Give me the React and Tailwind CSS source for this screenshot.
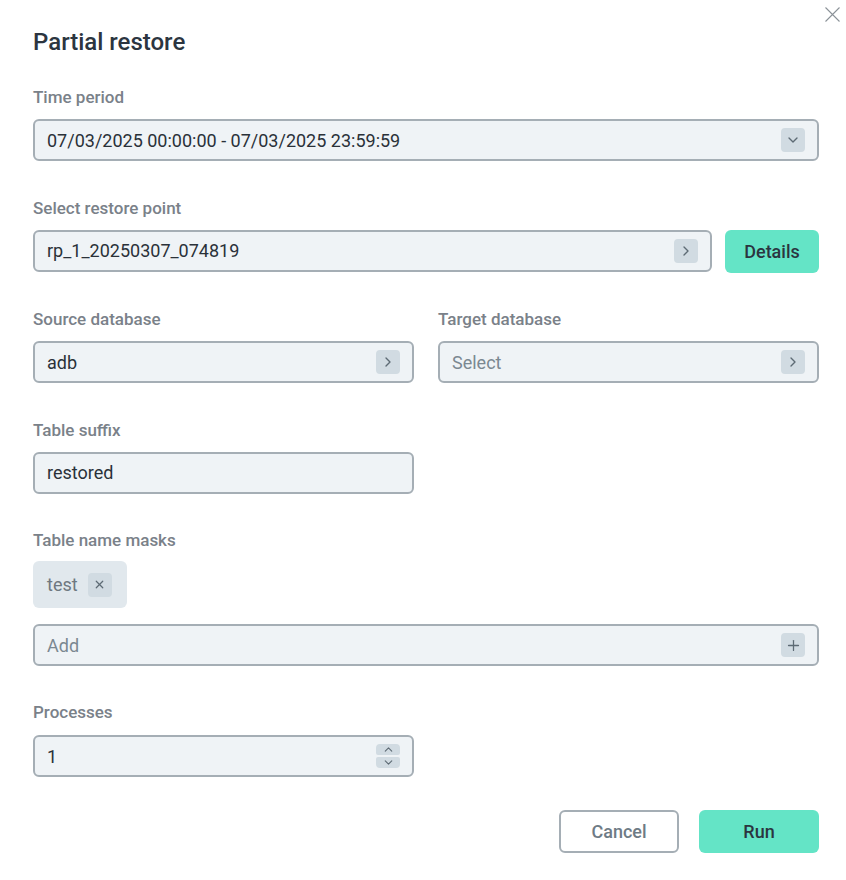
import { X, ChevronDown, ChevronRight, ChevronUp, Plus } from "lucide-react";

const font = { fontFamily: "Roboto, 'Noto Sans', sans-serif" };

function IconBox({ children, className = "" }) {
  return (
    <span
      className={`flex h-6 w-6 shrink-0 items-center justify-center rounded-[4px] bg-[#d1dbe2] text-[#5d6a74] ${className}`}
    >
      {children}
    </span>
  );
}

function Field({ label, children, className = "" }) {
  return (
    <div className={`flex flex-col ${className}`}>
      <label className="mb-[10px] h-6 text-[17px] leading-6 font-medium text-[#7a8189]">
        {label}
      </label>
      {children}
    </div>
  );
}

function Box({ value, placeholder, icon }) {
  return (
    <div className="flex h-[42px] items-center rounded-[6px] border-2 border-[#a5aeb5] bg-[#eff3f6] pl-3 pr-3">
      <span
        className={`flex-1 truncate text-[18px] ${
          value ? "text-[#2a3139]" : "text-[#7b8891]"
        }`}
      >
        {value || placeholder}
      </span>
      {icon}
    </div>
  );
}

export default function App() {
  return (
    <div className="relative min-h-screen w-full bg-white" style={font}>
      <button className="absolute right-[5px] top-[6px] text-[#8b9298]">
        <svg width="17" height="17" viewBox="0 0 17 17" fill="none" stroke="currentColor" strokeWidth="1.1">
          <path d="M1.5 1.5 L15.5 15.5 M15.5 1.5 L1.5 15.5" />
        </svg>
      </button>

      <div className="flex flex-col pl-[33px] pr-[27px] pt-[28px]">
        <h1 className="mb-[29px] h-7 text-[24px] leading-7 font-medium text-[#2c3540]">
          Partial restore
        </h1>

        <Field label="Time period" className="mb-[34.5px]">
          <Box
            value="07/03/2025 00:00:00 - 07/03/2025 23:59:59"
            icon={
              <IconBox>
                <ChevronDown className="h-4 w-4" strokeWidth={2} />
              </IconBox>
            }
          />
        </Field>

        <Field label="Select restore point" className="mb-[34.5px]">
          <div className="flex gap-[13px]">
            <div className="flex-1">
              <Box
                value="rp_1_20250307_074819"
                icon={
                  <IconBox>
                    <ChevronRight className="h-4 w-4" strokeWidth={2} />
                  </IconBox>
                }
              />
            </div>
            <button className="h-[43px] w-[94px] rounded-[6px] bg-[#64e4c6] text-[18px] font-medium text-[#2b3540]">
              Details
            </button>
          </div>
        </Field>

        <div className="mb-[34.5px] grid grid-cols-2 gap-[24px]">
          <Field label="Source database">
            <Box
              value="adb"
              icon={
                <IconBox>
                  <ChevronRight className="h-4 w-4" strokeWidth={2} />
                </IconBox>
              }
            />
          </Field>
          <Field label="Target database">
            <Box
              placeholder="Select"
              icon={
                <IconBox>
                  <ChevronRight className="h-4 w-4" strokeWidth={2} />
                </IconBox>
              }
            />
          </Field>
        </div>

        <div className="mb-[34.5px] grid grid-cols-2 gap-[24px]">
          <Field label="Table suffix">
            <Box value="restored" />
          </Field>
        </div>

        <div className="mb-[34px] flex flex-col">
          <label className="mb-[9px] h-6 text-[17px] leading-6 font-medium text-[#7a8189]">
            Table name masks
          </label>
          <div className="mb-[16px] flex">
            <span className="flex h-[47px] items-center gap-[10px] rounded-[6px] bg-[#e1e8ed] pl-[14px] pr-[15px] text-[18px] text-[#6f7880]">
              test
              <IconBox>
                <X className="h-[13px] w-[13px]" strokeWidth={2.2} />
              </IconBox>
            </span>
          </div>
          <Box
            placeholder="Add"
            icon={
              <IconBox>
                <Plus className="h-[17px] w-[17px]" strokeWidth={1.8} />
              </IconBox>
            }
          />
        </div>

        <div className="mb-[33px] grid grid-cols-2 gap-[24px]">
          <Field label="Processes" className="[&>label]:mb-[11px]">
            <Box
              value="1"
              icon={
                <span className="flex flex-col gap-[2px]">
                  <span className="flex h-[11px] w-6 items-center justify-center rounded-t-[4px] rounded-b-[2px] bg-[#d1dbe2] text-[#5d6a74]">
                    <ChevronUp className="h-[13px] w-[13px]" strokeWidth={2} />
                  </span>
                  <span className="flex h-[11px] w-6 items-center justify-center rounded-b-[4px] rounded-t-[2px] bg-[#d1dbe2] text-[#5d6a74]">
                    <ChevronDown className="h-[13px] w-[13px]" strokeWidth={2} />
                  </span>
                </span>
              }
            />
          </Field>
        </div>

        <div className="flex justify-end gap-[20px]">
          <button className="h-[43px] w-[120px] rounded-[6px] border-2 border-[#a5aeb5] bg-white text-[18px] font-medium text-[#6e7b85]">
            Cancel
          </button>
          <button className="h-[43px] w-[120px] rounded-[6px] bg-[#64e4c6] text-[18px] font-medium text-[#2b3540]">
            Run
          </button>
        </div>
      </div>
    </div>
  );
}
